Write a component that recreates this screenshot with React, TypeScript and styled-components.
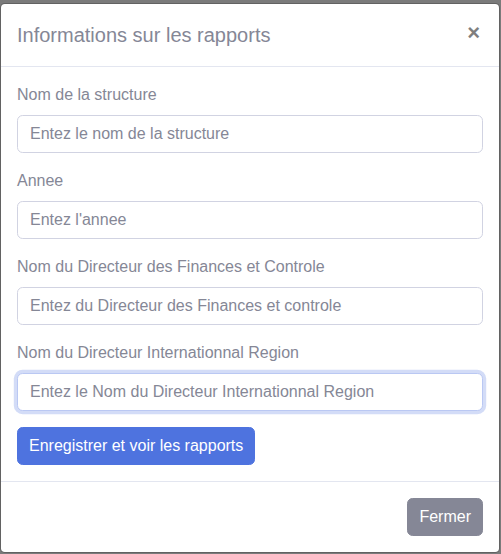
import React, { useEffect, useRef } from "react";
import styled, { createGlobalStyle } from "styled-components";

const GlobalStyle = createGlobalStyle`
  html, body {
    margin: 0;
    padding: 0;
    background: #7b7b7b;
  }
  body {
    font-family: "Liberation Sans", Arial, sans-serif;
    font-size: 16px;
    line-height: 1.5;
    color: #858796;
  }
  *, *::before, *::after { box-sizing: border-box; }
`;

const Backdrop = styled.div`
  width: 501px;
  height: 554px;
  padding: 3px 1px 0 0;
  background: #7b7b7b;
  overflow: hidden;
`;

const Modal = styled.div`
  display: flex;
  flex-direction: column;
  width: 500px;
  background: #fff;
  border: 1px solid rgba(0, 0, 0, 0.2);
  border-radius: 4.8px;
  background-clip: padding-box;
`;

const Header = styled.div`
  display: flex;
  align-items: flex-start;
  justify-content: space-between;
  padding: 16px;
  border-bottom: 1px solid #e3e6f0;
`;

const Title = styled.h5`
  margin: 0;
  font-size: 20px;
  font-weight: 400;
  line-height: 1.5;
  color: #858796;
`;

const CloseButton = styled.button`
  padding: 18px 19px 14px 16px;
  margin: -16px -16px -16px auto;
  background: transparent;
  border: 0;
  font-family: "Liberation Sans", Arial, sans-serif;
  font-size: 22px;
  font-weight: 700;
  line-height: 1;
  color: #000;
  opacity: 0.5;
  cursor: pointer;
`;

const Body = styled.div`
  padding: 16px;
`;

const Group = styled.div`
  margin-bottom: 16px;
`;

const Label = styled.label`
  display: block;
  margin-bottom: 8px;
  color: #858796;
`;

const Input = styled.input`
  display: block;
  width: 100%;
  height: 38px;
  padding: 6px 12px;
  font-family: "Liberation Sans", Arial, sans-serif;
  font-size: 16px;
  line-height: 1.5;
  color: #6e707e;
  background: #fff;
  border: 1px solid #d1d3e2;
  border-radius: 5.6px;
  outline: none;
  caret-color: #6e707e;
  &::placeholder { color: #858796; opacity: 1; }
  &:focus {
    border-color: #bac8f3;
    box-shadow: 0 0 0 3.2px rgba(78, 115, 223, 0.25);
  }
`;

const Button = styled.button<{ $variant: "primary" | "secondary" }>`
  display: inline-block;
  height: 38px;
  padding: 6px 11px;
  font-family: "Liberation Sans", Arial, sans-serif;
  font-size: 16px;
  line-height: 1.5;
  color: #fff;
  border: 1px solid ${p => (p.$variant === "primary" ? "#4e73df" : "#858796")};
  background: ${p => (p.$variant === "primary" ? "#4e73df" : "#858796")};
  border-radius: 5.6px;
  cursor: pointer;
`;

const Footer = styled.div`
  display: flex;
  justify-content: flex-end;
  align-items: center;
  padding: 12px;
  border-top: 1px solid #e3e6f0;
  & > * { margin: 4px; }
`;

const fields = [
  { label: "Nom de la structure", placeholder: "Entez le nom de la structure" },
  { label: "Annee", placeholder: "Entez l'annee" },
  { label: "Nom du Directeur des Finances et Controle", placeholder: "Entez du Directeur des Finances et controle" },
  { label: "Nom du Directeur Internationnal Region", placeholder: "Entez le Nom du Directeur Internationnal Region" },
];

export default function App() {
  const lastRef = useRef<HTMLInputElement>(null);
  useEffect(() => {
    lastRef.current?.focus();
  }, []);
  return (
    <>
      <GlobalStyle />
      <Backdrop>
        <Modal>
          <Header>
            <Title>Informations sur les rapports</Title>
            <CloseButton aria-label="Close">×</CloseButton>
          </Header>
          <Body>
            {fields.map((f, i) => (
              <Group key={f.label}>
                <Label htmlFor={`f${i}`}>{f.label}</Label>
                <Input
                  id={`f${i}`}
                  type="text"
                  placeholder={f.placeholder}
                  ref={i === fields.length - 1 ? lastRef : undefined}
                />
              </Group>
            ))}
            <Button $variant="primary">Enregistrer et voir les rapports</Button>
          </Body>
          <Footer>
            <Button $variant="secondary">Fermer</Button>
          </Footer>
        </Modal>
      </Backdrop>
    </>
  );
}
